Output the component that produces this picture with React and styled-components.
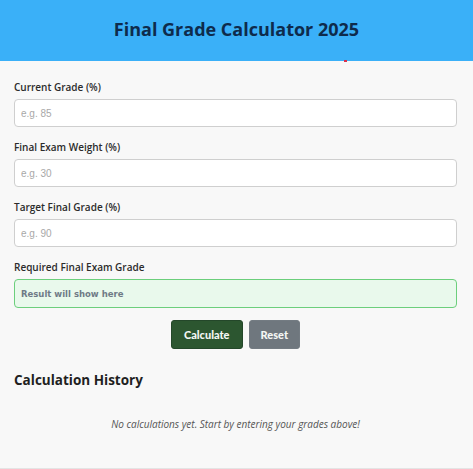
import React, { useState } from 'react';
import styled, { createGlobalStyle } from 'styled-components';

const GlobalStyle = createGlobalStyle`
  html, body {
    margin: 0;
    padding: 0;
    background: #f8f8f8;
  }
  body {
    font-family: "Open Sans", "Noto Sans", sans-serif;
  }
  * { box-sizing: border-box; }
`;

const Page = styled.div`
  min-height: 469px;
  background: #f8f8f8;
  border-bottom: 1px solid #e4e4e4;
`;

const Header = styled.header`
  position: relative;
  height: 61px;
  background: #3ab0f8;
  display: flex;
  align-items: center;
  justify-content: center;

  &::after {
    content: '';
    position: absolute;
    left: 344px;
    bottom: -1px;
    width: 3px;
    height: 2px;
    background: #d9304c;
  }
`;

const Title = styled.h1`
  margin: 0;
  font-family: "Open Sans", sans-serif;
  font-size: 18px;
  font-weight: 700;
  color: #0e2b4c;
  padding-bottom: 3px;
`;

const Main = styled.main`
  padding: 20px 16px 0 14px;
`;

const Field = styled.div`
  display: flex;
  flex-direction: column;
  gap: 6px;
  margin-bottom: 14px;
`;

const Label = styled.label`
  font-size: 10px;
  line-height: 12px;
  font-weight: 600;
  color: #2b2b2b;
`;

const Input = styled.input`
  height: 28px;
  width: 100%;
  padding: 0 6px;
  border: 1px solid #cfcfcf;
  border-radius: 4px;
  background: #fff;
  font-family: "Liberation Sans", Arial, sans-serif;
  font-size: 10px;
  color: #333;
  outline: none;

  &::placeholder {
    color: #a8a8a8;
  }
`;

const Result = styled.div`
  height: 29px;
  display: flex;
  align-items: center;
  padding: 0 6px;
  border: 1px solid #6ccf7c;
  border-radius: 4px;
  background: #e9f9ec;
  font-family: "DejaVu Sans", Verdana, sans-serif;
  font-size: 8.5px;
  font-weight: 700;
  color: #6f7b86;
`;

const Buttons = styled.div`
  display: flex;
  justify-content: center;
  gap: 6px;
  margin-top: -2px;
`;

const Button = styled.button`
  height: 29px;
  padding: 0 ${p => (p.$primary ? 12 : 11)}px;
  border: 1px solid ${p => (p.$primary ? '#24472a' : '#737b82')};
  border-radius: 3px;
  background: ${p => (p.$primary ? '#2c5630' : '#6f777e')};
  color: #f4f6f4;
  font-family: "Lato", sans-serif;
  font-size: 11px;
  font-weight: 900;
  cursor: pointer;
`;

const HistoryTitle = styled.h2`
  margin: 23px 0 0;
  font-size: 13.5px;
  line-height: 17px;
  font-weight: 700;
  color: #1f1f1f;
`;

const Empty = styled.p`
  margin: 28px 0 0;
  text-align: center;
  font-size: 10px;
  font-style: italic;
  color: #555;
`;

const fields = [
  { id: 'current', label: 'Current Grade (%)', placeholder: 'e.g. 85' },
  { id: 'weight', label: 'Final Exam Weight (%)', placeholder: 'e.g. 30' },
  { id: 'target', label: 'Target Final Grade (%)', placeholder: 'e.g. 90' },
];

export default function App() {
  const [values, setValues] = useState({ current: '', weight: '', target: '' });
  const [result, setResult] = useState(null);
  const [history, setHistory] = useState([]);

  const calculate = () => {
    const c = parseFloat(values.current);
    const w = parseFloat(values.weight) / 100;
    const t = parseFloat(values.target);
    if (isNaN(c) || isNaN(w) || isNaN(t) || w === 0) return;
    const needed = ((t - c * (1 - w)) / w).toFixed(2);
    setResult(needed + '%');
    setHistory(h => [...h, { c, w, t, needed }]);
  };

  const reset = () => {
    setValues({ current: '', weight: '', target: '' });
    setResult(null);
  };

  return (
    <Page>
      <GlobalStyle />
      <Header>
        <Title>Final Grade Calculator 2025</Title>
      </Header>
      <Main>
        {fields.map(f => (
          <Field key={f.id}>
            <Label htmlFor={f.id}>{f.label}</Label>
            <Input
              id={f.id}
              type="number"
              placeholder={f.placeholder}
              value={values[f.id]}
              onChange={e => setValues({ ...values, [f.id]: e.target.value })}
            />
          </Field>
        ))}
        <Field>
          <Label>Required Final Exam Grade</Label>
          <Result>{result || 'Result will show here'}</Result>
        </Field>
        <Buttons>
          <Button $primary onClick={calculate}>Calculate</Button>
          <Button onClick={reset}>Reset</Button>
        </Buttons>
        <HistoryTitle>Calculation History</HistoryTitle>
        {history.length === 0 && (
          <Empty>No calculations yet. Start by entering your grades above!</Empty>
        )}
      </Main>
    </Page>
  );
}
